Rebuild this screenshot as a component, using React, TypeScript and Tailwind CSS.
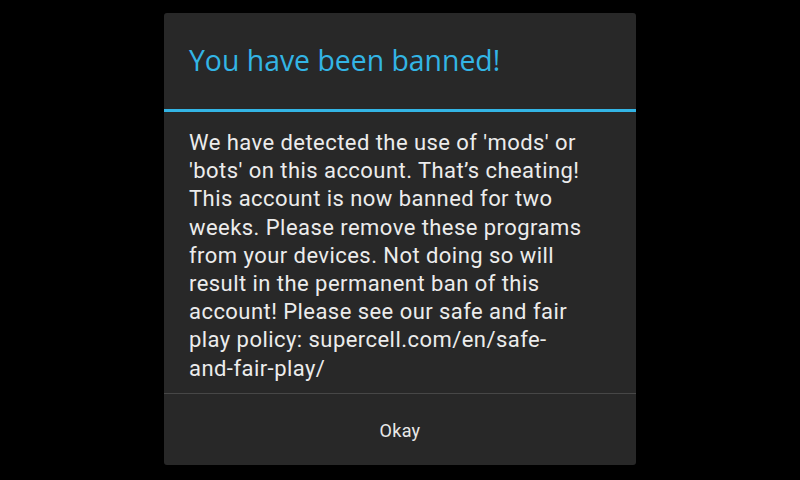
import React from "react";

const lines = [
  "We have detected the use of 'mods' or",
  "'bots' on this account. That\u2019s cheating!",
  "This account is now banned for two",
  "weeks. Please remove these programs",
  "from your devices. Not doing so will",
  "result in the permanent ban of this",
  "account! Please see our safe and fair",
  "play policy: supercell.com/en/safe-",
  "and-fair-play/",
];

export default function App() {
  return (
    <div className="w-[800px] h-[480px] bg-black flex justify-center pt-[13px]">
      <div className="w-[472px] h-[452px] bg-[#282828] rounded-[3px] flex flex-col">
        <div className="h-[96px] flex items-center px-[25px] pb-[2px] shrink-0">
          <span
            className="text-[#33b5e5] text-[28.4px] leading-none"
            style={{ fontFamily: '"Open Sans", "DejaVu Sans", sans-serif' }}
          >
            You have been banned!
          </span>
        </div>
        <div className="h-[3px] bg-[#33b5e5] shrink-0" />
        <div
          className="h-[281px] px-[25px] pt-[17px] text-[#ececec] text-[22px] leading-[28.2px] tracking-[0.45px] shrink-0"
          style={{ fontFamily: 'Roboto, "Liberation Sans", sans-serif' }}
        >
          {lines.map((l, i) => (
            <div key={i} className="whitespace-nowrap">
              {l}
            </div>
          ))}
        </div>
        <div className="h-px bg-[#474747] shrink-0" />
        <div
          className="flex-1 flex items-center justify-center pt-[1px] text-[#e8e8e8] text-[18px] tracking-[0.3px]"
          style={{ fontFamily: 'Roboto, "Liberation Sans", sans-serif' }}
        >
          Okay
        </div>
      </div>
    </div>
  );
}
